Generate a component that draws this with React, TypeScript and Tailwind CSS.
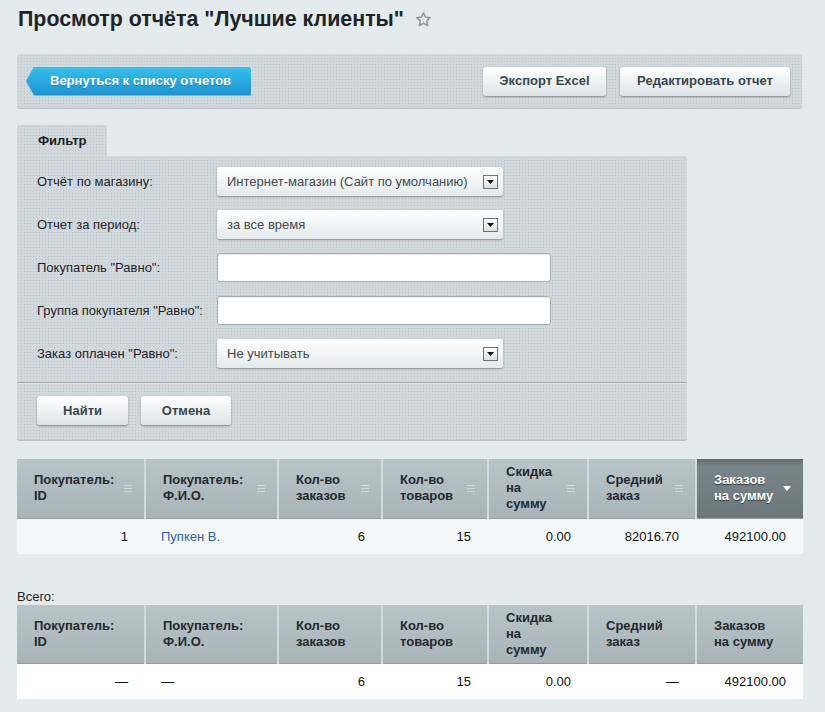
import React from 'react';

const dotted =
  'bg-[#d2d9dd] bg-[radial-gradient(#bcc5c9_0.7px,transparent_1px)] bg-[length:3px_3px]';

const grayBtn =
  'h-[29px] rounded-[3px] bg-[linear-gradient(to_bottom,#ffffff,#dde4e6)] shadow-[0_1px_2px_rgba(0,0,0,0.4)] text-[13px] font-bold text-[#3a474d]';

const Star = () => (
  <svg width="17" height="17" viewBox="0 0 24 24" fill="none" stroke="#8e999e" strokeWidth="2.2" strokeLinejoin="round">
    <path d="M12 2.5l2.9 6.1 6.6.8-4.9 4.6 1.3 6.6L12 17.3l-5.9 3.3 1.3-6.6-4.9-4.6 6.6-.8z" />
  </svg>
);

const SortLines = () => (
  <svg width="8" height="7" viewBox="0 0 8 7" className="shrink-0">
    <rect x="0" y="0" width="8" height="1" fill="#d3dadd" />
    <rect x="0" y="3" width="8" height="1" fill="#d3dadd" />
    <rect x="0" y="6" width="8" height="1" fill="#d3dadd" />
  </svg>
);

const Select: React.FC<{ value: string }> = ({ value }) => (
  <div className="relative flex h-[29px] w-[286px] items-center rounded-[3px] bg-[linear-gradient(to_bottom,#ffffff,#e4eaec)] pl-[10px] text-[13px] text-[#454a4d] shadow-[0_1px_2px_rgba(0,0,0,0.35)]">
    {value}
    <span className="absolute right-[5px] top-[8px] flex h-[14px] w-[15px] items-center justify-center border border-[#6e7376] bg-[linear-gradient(to_bottom,#ffffff,#dcdfe0)]">
      <svg width="7" height="4" viewBox="0 0 7 4">
        <path d="M0 0h7L3.5 4z" fill="#111" />
      </svg>
    </span>
  </div>
);

const TextInput = () => (
  <div className="h-[29px] w-[334px] rounded-[3px] border border-[#a3adb1] bg-white shadow-[inset_0_1px_1px_rgba(0,0,0,0.08)]" />
);

const filterRows: { label: string; control: React.ReactNode }[] = [
  { label: 'Отчёт по магазину:', control: <Select value="Интернет-магазин (Сайт по умолчанию)" /> },
  { label: 'Отчет за период:', control: <Select value="за все время" /> },
  { label: 'Покупатель "Равно":', control: <TextInput /> },
  { label: 'Группа покупателя "Равно":', control: <TextInput /> },
  { label: 'Заказ оплачен "Равно":', control: <Select value="Не учитывать" /> },
];

const columns: { w: number; label: string[] }[] = [
  { w: 128, label: ['Покупатель:', 'ID'] },
  { w: 133, label: ['Покупатель:', 'Ф.И.О.'] },
  { w: 104, label: ['Кол-во', 'заказов'] },
  { w: 106, label: ['Кол-во', 'товаров'] },
  { w: 100, label: ['Скидка', 'на', 'сумму'] },
  { w: 108, label: ['Средний', 'заказ'] },
  { w: 107, label: ['Заказов', 'на сумму'] },
];

interface TableProps {
  cells: React.ReactNode[];
  sortable?: boolean;
  bodyBg: string;
  headH: string;
}

const ReportTable: React.FC<TableProps> = ({ cells, sortable, bodyBg, headH }) => (
  <table className="w-[786px] table-fixed border-collapse">
    <colgroup>
      {columns.map((c, i) => (
        <col key={i} style={{ width: c.w }} />
      ))}
    </colgroup>
    <thead>
      <tr>
        {columns.map((c, i) => {
          const sorted = sortable && i === columns.length - 1;
          return (
            <th
              key={i}
              className={
                'p-0 text-left align-middle text-[13px] font-bold leading-[16px] border-b border-b-[#909ca0] ' +
                headH +
                ' ' +
                (i > 0 ? 'border-l-2 border-l-[#d4dbde] ' : '') +
                (sorted
                  ? 'bg-[linear-gradient(to_bottom,#5f696e,#7a858a_12%,#6c777c)] text-white [text-shadow:0_1px_1px_#2f3639]'
                  : 'bg-[linear-gradient(to_bottom,#b9c4c8,#a8b4b8)] text-[#23292c]')
              }
            >
              <div className="flex items-center justify-between pl-[17px] pr-[12px]">
                <span>
                  {c.label.map((l, j) => (
                    <React.Fragment key={j}>
                      {j > 0 && <br />}
                      {l}
                    </React.Fragment>
                  ))}
                </span>
                {sortable &&
                  (sorted ? (
                    <svg width="8" height="5" viewBox="0 0 8 5" className="shrink-0">
                      <path d="M0 0h8L4 5z" fill="#ffffff" />
                    </svg>
                  ) : (
                    <SortLines />
                  ))}
              </div>
            </th>
          );
        })}
      </tr>
    </thead>
    <tbody>
      <tr className={bodyBg}>
        {cells.map((v, i) => (
          <td
            key={i}
            className={
              'h-[36px] p-0 text-[13px] text-[#111] ' +
              (i === 1 ? 'pl-[16px] text-left' : 'pr-[17px] text-right')
            }
          >
            {v}
          </td>
        ))}
      </tr>
    </tbody>
  </table>
);

export default function App() {
  return (
    <div className="min-h-[712px] bg-[#e4ebed] px-[17px] pb-[12px] font-['Liberation_Sans',Arial,sans-serif]">
      <h1 className="flex items-center gap-[11px] pl-px pt-[6px] text-[21.4px] font-bold leading-[26px] text-[#1f2427]">
        Просмотр отчёта "Лучшие клиенты"
        <Star />
      </h1>

      <div className={'mt-[22px] flex h-[54px] w-[785px] items-center rounded-[3px] pl-[9px] pr-[12px] shadow-[0_1px_0_#b9c2c6] ' + dotted}>
        <button className="h-[29px] w-[225px] rounded-r-[3px] bg-[linear-gradient(to_bottom,#36c0ec,#1a92d0)] pl-[24px] text-left text-[13px] font-bold text-white shadow-[0_1px_0_#1373ab] [clip-path:polygon(8px_0,100%_0,100%_100%,8px_100%,0_50%)] [text-shadow:0_1px_0_rgba(0,0,0,0.2)]">
          Вернуться к списку отчетов
        </button>
        <div className="ml-auto flex gap-[14px]">
          <button className={grayBtn + ' w-[123px]'}>Экспорт Excel</button>
          <button className={grayBtn + ' w-[170px]'}>Редактировать отчет</button>
        </div>
      </div>

      <div className="mt-[17px]">
        <div className={'flex h-[31px] w-[90px] items-center rounded-t-[3px] pl-[21px] text-[13px] font-bold text-[#1c2124] ' + dotted}>
          Фильтр
        </div>
        <div className={'w-[670px] rounded-b-[3px] rounded-tr-[3px] pt-[11px] shadow-[0_1px_0_#b9c2c6] ' + dotted}>
          <div className="flex flex-col gap-[14px] pl-[20px]">
            {filterRows.map((r, i) => (
              <div key={i} className="flex items-center">
                <div className="w-[180px] text-[13px] text-[#1f2326]">{r.label}</div>
                {r.control}
              </div>
            ))}
          </div>
          <div className="mt-[14px] h-px bg-[#9aa6ab] shadow-[0_1px_0_#e3e8ea]" />
          <div className="flex gap-[13px] pb-[15px] pl-[20px] pt-[13px]">
            <button className={grayBtn + ' w-[91px]'}>Найти</button>
            <button className={grayBtn + ' w-[90px]'}>Отмена</button>
          </div>
        </div>
      </div>

      <div className="mt-[19px]">
        <ReportTable
          sortable
          headH="h-[59px]"
          bodyBg="bg-[#f4f8f9]"
          cells={[
            '1',
            <a key="n" className="text-[#2a62ad]">Пупкен В.</a>,
            '6',
            '15',
            '0.00',
            '82016.70',
            '492100.00',
          ]}
        />
      </div>

      <div className="mt-[35px] text-[13px] leading-[16px] text-[#1f2326]">Всего:</div>
      <ReportTable
        headH="h-[58px]"
        bodyBg="bg-white"
        cells={['—', '—', '6', '15', '0.00', '—', '492100.00']}
      />
    </div>
  );
}
